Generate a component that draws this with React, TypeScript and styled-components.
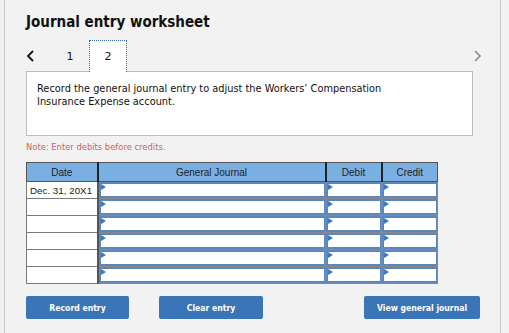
import React from 'react';
import styled, { createGlobalStyle } from 'styled-components';

const GlobalStyle = createGlobalStyle`
  html, body {
    margin: 0;
    padding: 0;
    background: #f2f2f2;
  }
`;

const Page = styled.div`
  width: 509px;
  height: 333px;
  overflow: hidden;
  background: #f2f2f2;
`;

const Panel = styled.div`
  margin-left: 4px;
  width: 497px;
  height: 333px;
  box-sizing: border-box;
  border-left: 1px solid #c8c8c8;
  border-right: 1px solid #c8c8c8;
  padding: 12px 0 0 21px;
  font-family: "DejaVu Sans", Verdana, sans-serif;
`;

const Title = styled.h1`
  margin: 0;
  font-family: "DejaVu Sans Condensed", "DejaVu Sans", Verdana, sans-serif;
  font-stretch: condensed;
  font-size: 15px;
  line-height: 20px;
  font-weight: bold;
  color: #111;
`;

const TabRow = styled.div`
  display: flex;
  align-items: stretch;
  height: 32px;
  margin-top: 8px;
  width: 456px;
  position: relative;
  z-index: 1;
`;

const Arrow = styled.div<{ $dim?: boolean }>`
  width: 16px;
  display: flex;
  align-items: center;
  justify-content: ${p => (p.$dim ? 'flex-end' : 'flex-start')};
  margin-left: ${p => (p.$dim ? 'auto' : '0')};
`;

const Tab = styled.div<{ $active?: boolean }>`
  width: 38px;
  box-sizing: border-box;
  display: flex;
  align-items: center;
  justify-content: center;
  font-size: 11px;
  color: #111;
  margin-left: ${p => (p.$active ? '0' : '9px')};
  background: ${p => (p.$active ? '#fff' : 'transparent')};
  border: ${p => (p.$active ? '1px dotted #2d64b0' : 'none')};
  border-bottom: none;
`;

const Prompt = styled.div`
  width: 447px;
  height: 65px;
  box-sizing: border-box;
  background: #fff;
  border: 1px solid #bdbdbd;
  margin-top: -1px;
  padding: 10px 10px 0 10px;
  font-size: 9.8px;
  line-height: 13px;
  color: #111;
`;

const Note = styled.div`
  margin-top: 6px;
  font-size: 8.4px;
  color: #c8625f;
`;

const Table = styled.table`
  margin-top: 10px;
  border-collapse: collapse;
  table-layout: fixed;
  width: 411px;
  font-family: "Liberation Sans", Arial, sans-serif;
`;

const Th = styled.th`
  height: 18px;
  padding: 0;
  background: #7aafe4;
  border: 1px solid #555;
  border-right: 2px solid #222;
  font-size: 10px;
  font-weight: normal;
  color: #222;
  &:last-child {
    border-right: 1px solid #555;
  }
`;

const DateCell = styled.td`
  height: 16px;
  padding: 0 0 0 3px;
  background: #fff;
  border: 1px solid #7a7a7a;
  border-right: 2px solid #555;
  font-size: 9.8px;
  color: #222;
  white-space: nowrap;
  overflow: hidden;
`;

const InputCell = styled.td`
  height: 16px;
  padding: 0;
  border: 1px solid #8a8a8a;
  background: #fff;
`;

const Field = styled.div`
  position: relative;
  height: 16px;
  box-sizing: border-box;
  border: 2px solid #5d86bb;
  border-right-width: 1px;
  background: #fff;
  &::before {
    content: '';
    position: absolute;
    left: 0;
    top: 0;
    border-top: 3px solid transparent;
    border-bottom: 3px solid transparent;
    border-left: 5px solid #3a78c4;
  }
`;

const ButtonRow = styled.div`
  display: flex;
  margin-top: 12px;
  width: 454px;
`;

const Button = styled.button<{ $w: number; $gap?: number; $push?: boolean }>`
  width: ${p => p.$w}px;
  height: 23px;
  margin-left: ${p => (p.$push ? 'auto' : `${p.$gap || 0}px`)};
  background: #3a75b8;
  border: none;
  border-radius: 2px;
  color: #fff;
  font-family: "DejaVu Sans Condensed", "DejaVu Sans", Verdana, sans-serif;
  font-stretch: condensed;
  font-size: 8.6px;
  font-weight: bold;
  padding: 0;
`;

const rows = ['Dec. 31, 20X1', '', '', '', '', ''];

export default function App() {
  return (
    <Page>
      <GlobalStyle />
      <Panel>
        <Title>Journal entry worksheet</Title>
        <TabRow>
          <Arrow>
            <svg width="9" height="12" viewBox="0 0 9 12">
              <path d="M7 1 L2 6 L7 11" fill="none" stroke="#111" strokeWidth="1.8" />
            </svg>
          </Arrow>
          <Tab>1</Tab>
          <Tab $active>2</Tab>
          <Arrow $dim>
            <svg width="9" height="12" viewBox="0 0 9 12">
              <path d="M2 1 L7 6 L2 11" fill="none" stroke="#8a8a8a" strokeWidth="1.6" />
            </svg>
          </Arrow>
        </TabRow>
        <Prompt>
          Record the general journal entry to adjust the Workers’ Compensation
          <br />
          Insurance Expense account.
        </Prompt>
        <Note>Note: Enter debits before credits.</Note>
        <Table>
          <colgroup>
            <col style={{ width: 71 }} />
            <col style={{ width: 228 }} />
            <col style={{ width: 56 }} />
            <col style={{ width: 56 }} />
          </colgroup>
          <thead>
            <tr>
              <Th>Date</Th>
              <Th>General Journal</Th>
              <Th>Debit</Th>
              <Th>Credit</Th>
            </tr>
          </thead>
          <tbody>
            {rows.map((d, i) => (
              <tr key={i}>
                <DateCell>{d}</DateCell>
                <InputCell><Field /></InputCell>
                <InputCell><Field /></InputCell>
                <InputCell><Field /></InputCell>
              </tr>
            ))}
          </tbody>
        </Table>
        <ButtonRow>
          <Button $w={103}>Record entry</Button>
          <Button $w={104} $gap={30}>Clear entry</Button>
          <Button $w={116} $push>View general journal</Button>
        </ButtonRow>
      </Panel>
    </Page>
  );
}
